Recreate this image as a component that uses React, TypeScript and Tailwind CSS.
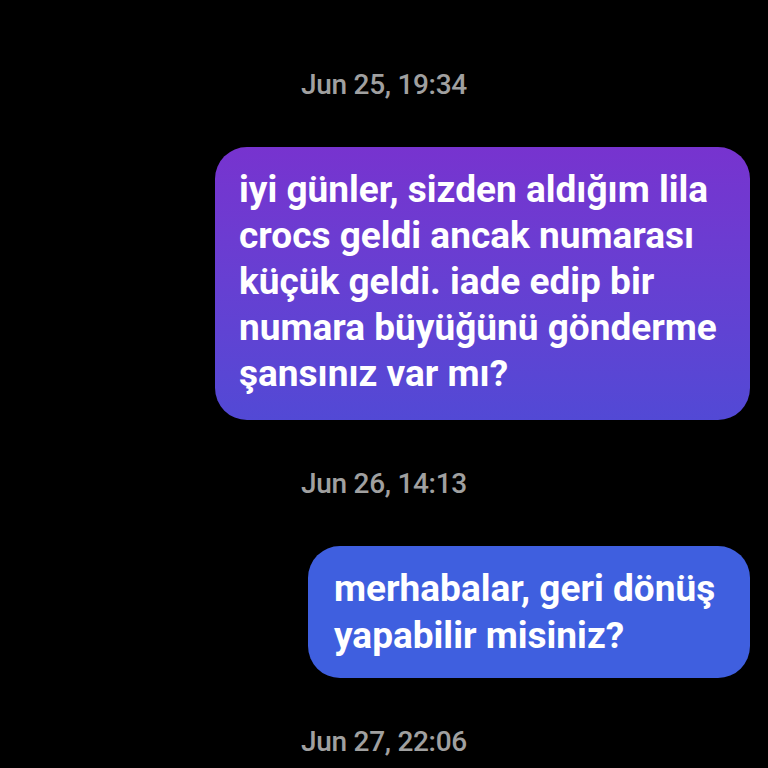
import React from "react";

function Stamp({ text }: { text: string }) {
  return (
    <div className="flex h-[44px] items-center justify-center">
      <span className="text-[28px] font-medium leading-none tracking-[-0.3px] text-[#a0a0a0]">{text}</span>
    </div>
  );
}

function Bubble({ lines, className }: { lines: string[]; className: string }) {
  return (
    <div className={"rounded-[32px] text-[37px] font-bold text-white " + className}>
      {lines.map((l, i) => (
        <div key={i} className="whitespace-nowrap">
          {l}
        </div>
      ))}
    </div>
  );
}

export default function App() {
  return (
    <div
      className="flex h-[768px] w-[768px] flex-col overflow-hidden bg-black"
      style={{ fontFamily: "Roboto, 'Noto Sans', sans-serif" }}
    >
      <div className="h-[63px]" />
      <Stamp text="Jun 25, 19:34" />
      <div className="h-[40px]" />
      <div className="flex justify-end pr-[18px]">
        <Bubble
          className="w-[535px] bg-gradient-to-b from-[#7733cf] to-[#5249d5] pl-[24px] pt-[20px] pb-[23px] leading-[46px]"
          lines={[
            "iyi günler, sizden aldığım lila",
            "crocs geldi ancak numarası",
            "küçük geldi. iade edip bir",
            "numara büyüğünü gönderme",
            "şansınız var mı?",
          ]}
        />
      </div>
      <div className="h-[42px]" />
      <Stamp text="Jun 26, 14:13" />
      <div className="h-[40px]" />
      <div className="flex justify-end pr-[18px]">
        <Bubble
          className="w-[442px] bg-[#3f5fdf] pl-[26px] pt-[19px] pb-[19px] leading-[47px]"
          lines={["merhabalar, geri dönüş", "yapabilir misiniz?"]}
        />
      </div>
      <div className="h-[42px]" />
      <Stamp text="Jun 27, 22:06" />
    </div>
  );
}
